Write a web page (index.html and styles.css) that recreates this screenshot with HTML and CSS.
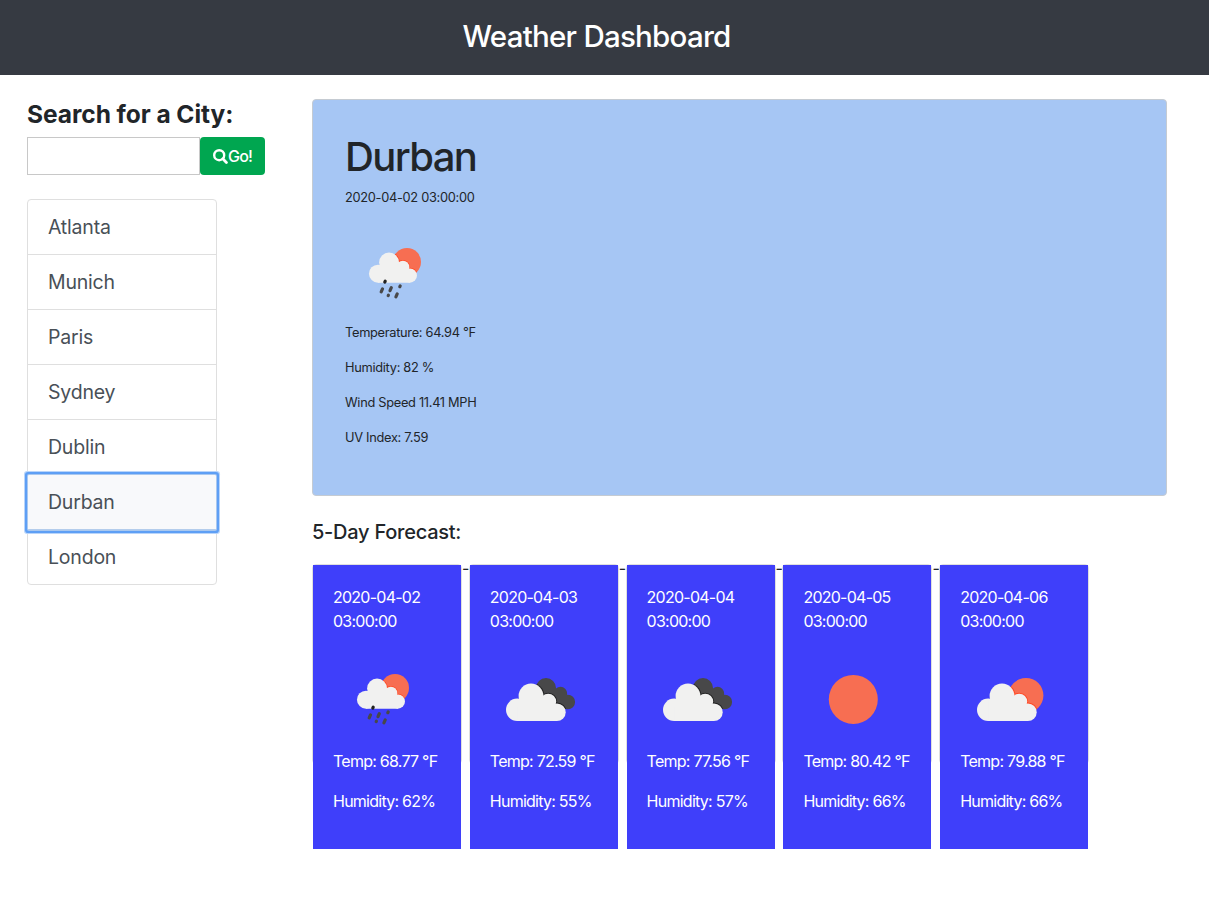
FILE: index.html
```html
<!DOCTYPE html>
<html lang="en">
<head>
<meta charset="utf-8">
<title>Weather Dashboard</title>
<link rel="stylesheet" href="styles.css">
</head>
<body>
<svg class="defs" width="0" height="0" aria-hidden="true">
  <defs>
    <g id="cloud">
      <circle cx="27.2" cy="60.8" r="11.2"/><circle cx="41" cy="47" r="12.4"/>
      <circle cx="58.2" cy="52.7" r="8"/><circle cx="66.9" cy="63.2" r="8.8"/>
      <path d="M27.2 50H41L58 50L67 58V72H27.2Z"/>
    </g>
    <clipPath id="sunClip"><circle cx="65" cy="46.4" r="17.4"/></clipPath>
    <clipPath id="darkClip"><circle cx="56" cy="39" r="10"/><circle cx="70.5" cy="44.3" r="6.6"/><circle cx="77.8" cy="53" r="7.3"/><path d="M56 39L65 41L74 47L78 56H60Z"/></clipPath>
    <clipPath id="rainSunClip"><circle cx="62" cy="39" r="14"/></clipPath>
    <symbol id="few" viewBox="0 0 100 100">
      <g clip-path="url(#sunClip)"><rect width="100" height="100" fill="#f76e52"/><use href="#cloud" fill="#ff4a26" stroke="#ff4a26" stroke-width="2"/></g>
      <use href="#cloud" fill="#f1f1f0"/>
    </symbol>
    <symbol id="broken" viewBox="0 0 100 100">
      <g clip-path="url(#darkClip)"><rect width="100" height="100" fill="#484849"/><use href="#cloud" fill="#222" stroke="#222" stroke-width="2"/></g>
      <use href="#cloud" fill="#f1f1f0"/>
    </symbol>
    <symbol id="sun" viewBox="0 0 100 100"><circle cx="50.3" cy="50.4" r="24.5" fill="#f76e52"/></symbol>
    <symbol id="rain" viewBox="0 0 100 100">
      <g clip-path="url(#rainSunClip)"><rect width="100" height="100" fill="#f76e52"/><use href="#cloud" transform="translate(11.1 1.8) scale(.804)" fill="#ff4a26" stroke="#ff4a26" stroke-width="2"/></g>
      <use href="#cloud" transform="translate(11.1 1.8) scale(.804)" fill="#f1f1f0"/>
      <g stroke="#484849" stroke-width="3.2" stroke-linecap="round">
        <path stroke="#222" d="M39.8 59L40.2 58.2"/><path d="M36.2 68.9L37.5 65.9M45 67.7L46.3 64.7M54.8 63.7L55.2 62.9M43.2 72.6L43.4 72.2M50.9 73.8L52.2 70.9"/>
      </g>
    </symbol>
  </defs>
</svg>
<header class="topbar"><h1 class="title"><span class="title-text">Weather Dashboard</span></h1></header>
<div class="layout">
  <aside class="sidebar">
    <h2 class="search-title"><span>Search for a City:</span></h2>
    <div class="search">
      <input class="search-input" type="text" aria-label="City">
      <button class="search-btn"><svg class="search-icon" viewBox="0 0 15 15"><circle cx="6.2" cy="6.2" r="5" fill="none" stroke="#fff" stroke-width="2.4"/><path d="M9.8 9.8L13.4 13.4" stroke="#fff" stroke-width="2.8" stroke-linecap="round"/></svg><span>Go!</span></button>
    </div>
    <div class="cities">
      <div class="city">Atlanta</div>
      <div class="city">Munich</div>
      <div class="city">Paris</div>
      <div class="city">Sydney</div>
      <div class="city">Dublin</div>
      <div class="city city-active">Durban</div>
      <div class="city">London</div>
    </div>
  </aside>
  <main class="content">
    <section class="current">
      <h2 class="current-name">Durban</h2>
      <p class="current-line current-date">2020-04-02 03:00:00</p>
      <svg class="icon"><use href="#rain"/></svg>
      <p class="current-line">Temperature: 64.94 °F</p>
      <p class="current-line">Humidity: 82 %</p>
      <p class="current-line">Wind Speed 11.41 MPH</p>
      <p class="current-line">UV Index: 7.59</p>
    </section>
    <h3 class="forecast-title">5-Day Forecast:</h3>
    <section class="forecast">
      <div class="card"><div class="card-body"><p class="date">2020-04-02 03:00:00</p><svg class="icon"><use href="#rain"/></svg><p class="stat">Temp: 68.77 °F</p><p class="stat">Humidity: 62%</p></div></div>
      <span class="dash">-</span>
      <div class="card"><div class="card-body"><p class="date">2020-04-03 03:00:00</p><svg class="icon"><use href="#broken"/></svg><p class="stat">Temp: 72.59 °F</p><p class="stat">Humidity: 55%</p></div></div>
      <span class="dash">-</span>
      <div class="card"><div class="card-body"><p class="date">2020-04-04 03:00:00</p><svg class="icon"><use href="#broken"/></svg><p class="stat">Temp: 77.56 °F</p><p class="stat">Humidity: 57%</p></div></div>
      <span class="dash">-</span>
      <div class="card"><div class="card-body"><p class="date">2020-04-05 03:00:00</p><svg class="icon"><use href="#sun"/></svg><p class="stat">Temp: 80.42 °F</p><p class="stat">Humidity: 66%</p></div></div>
      <span class="dash">-</span>
      <div class="card"><div class="card-body"><p class="date">2020-04-06 03:00:00</p><svg class="icon icon-few"><use href="#few"/></svg><p class="stat">Temp: 79.88 °F</p><p class="stat">Humidity: 66%</p></div></div>
    </section>
  </main>
</div>
</body>
</html>
```

FILE: styles.css
```css
* { box-sizing: border-box; }
body { margin: 0; min-height: 917px; background: #fff; color: #212529; font: 16px/1.5 Inter, "Liberation Sans", sans-serif; }
h1, h2, h3, p { margin: 0; }
.defs { position: absolute; }
.topbar { height: 75px; padding: 17px 16px 0 0; background: #363a42; color: #fff; text-align: center; }
.title { font-size: 29.5px; line-height: 38px; font-weight: 550; letter-spacing: -0.75px; white-space: nowrap; }
.layout { display: flex; padding: 25px 42px 0 27px; }
.sidebar { width: 285px; flex: none; }
.search-title { font-size: 24.5px; line-height: 30px; font-weight: 700; letter-spacing: -0.05px; margin-bottom: 8px; white-space: nowrap; }
.search { display: flex; height: 38px; margin-bottom: 24px; }
.search-input { width: 173px; height: 38px; border: 1px solid #c8c8c8; padding: 0 8px; border-radius: 0; }
.search-btn { display: flex; align-items: center; width: 65px; padding: 0 0 0 13px; border: 0; border-radius: 4px; background: #00a650; color: #fff; font: 450 16px/24px Inter, sans-serif; letter-spacing: -0.8px; }
.search-icon { width: 15px; height: 15px; margin-top: 1px; flex: none; }
.cities { width: 190px; border: 1px solid #dfdfdf; border-radius: 4px; }
.city { height: 55px; padding: 12px 20px; font-size: 19.5px; line-height: 30px; font-weight: 430; letter-spacing: -0.2px; color: #495057; border-bottom: 1px solid #dfdfdf; }
.city:last-child { height: 54px; border-bottom: 0; }
.city-active { position: relative; border-radius: 1px; background: #f8f9fb; border-bottom-color: #b4cdec; box-shadow: 0 0 0 1px #a9c8ef, 0 0 0 3px #5e9ff5, 0 0 0 4px #b9d5fa; }
.layout { padding-top: 24px; }
.content { flex: 1; min-width: 0; }
.current { height: 397px; padding: 32px; border: 1px solid #c5cbd2; border-radius: 4px; background: #a6c6f4; }
.current-name { padding-top: 1px; font-size: 40px; line-height: 47px; font-weight: 530; margin-bottom: 8px; letter-spacing: -1.6px; }
.current-line { font-size: 12.8px; line-height: 19px; margin-bottom: 16px; letter-spacing: -0.29px; }
.icon { display: block; width: 100px; height: 100px; }
.icon-few { margin-left: 1px; }
.forecast-title { margin-top: 24px; font-size: 20px; line-height: 24px; font-weight: 530; letter-spacing: -0.25px; white-space: nowrap; }
.forecast { display: flex; margin-top: 20px; height: 285px; }
.card { width: 150px; height: 200px; flex: none; border: 1px solid #dfdfdf; border-radius: 4px; }
.card-body { width: 148px; height: 284px; padding: 20px; background: #3f3ffa; color: #fff; }
.date, .stat { margin-bottom: 16px; font-weight: 430; letter-spacing: -0.75px; }
.stat { white-space: nowrap; }
.dash { width: 6.8px; flex: none; line-height: 8px; text-align: center; overflow: visible; }
```
